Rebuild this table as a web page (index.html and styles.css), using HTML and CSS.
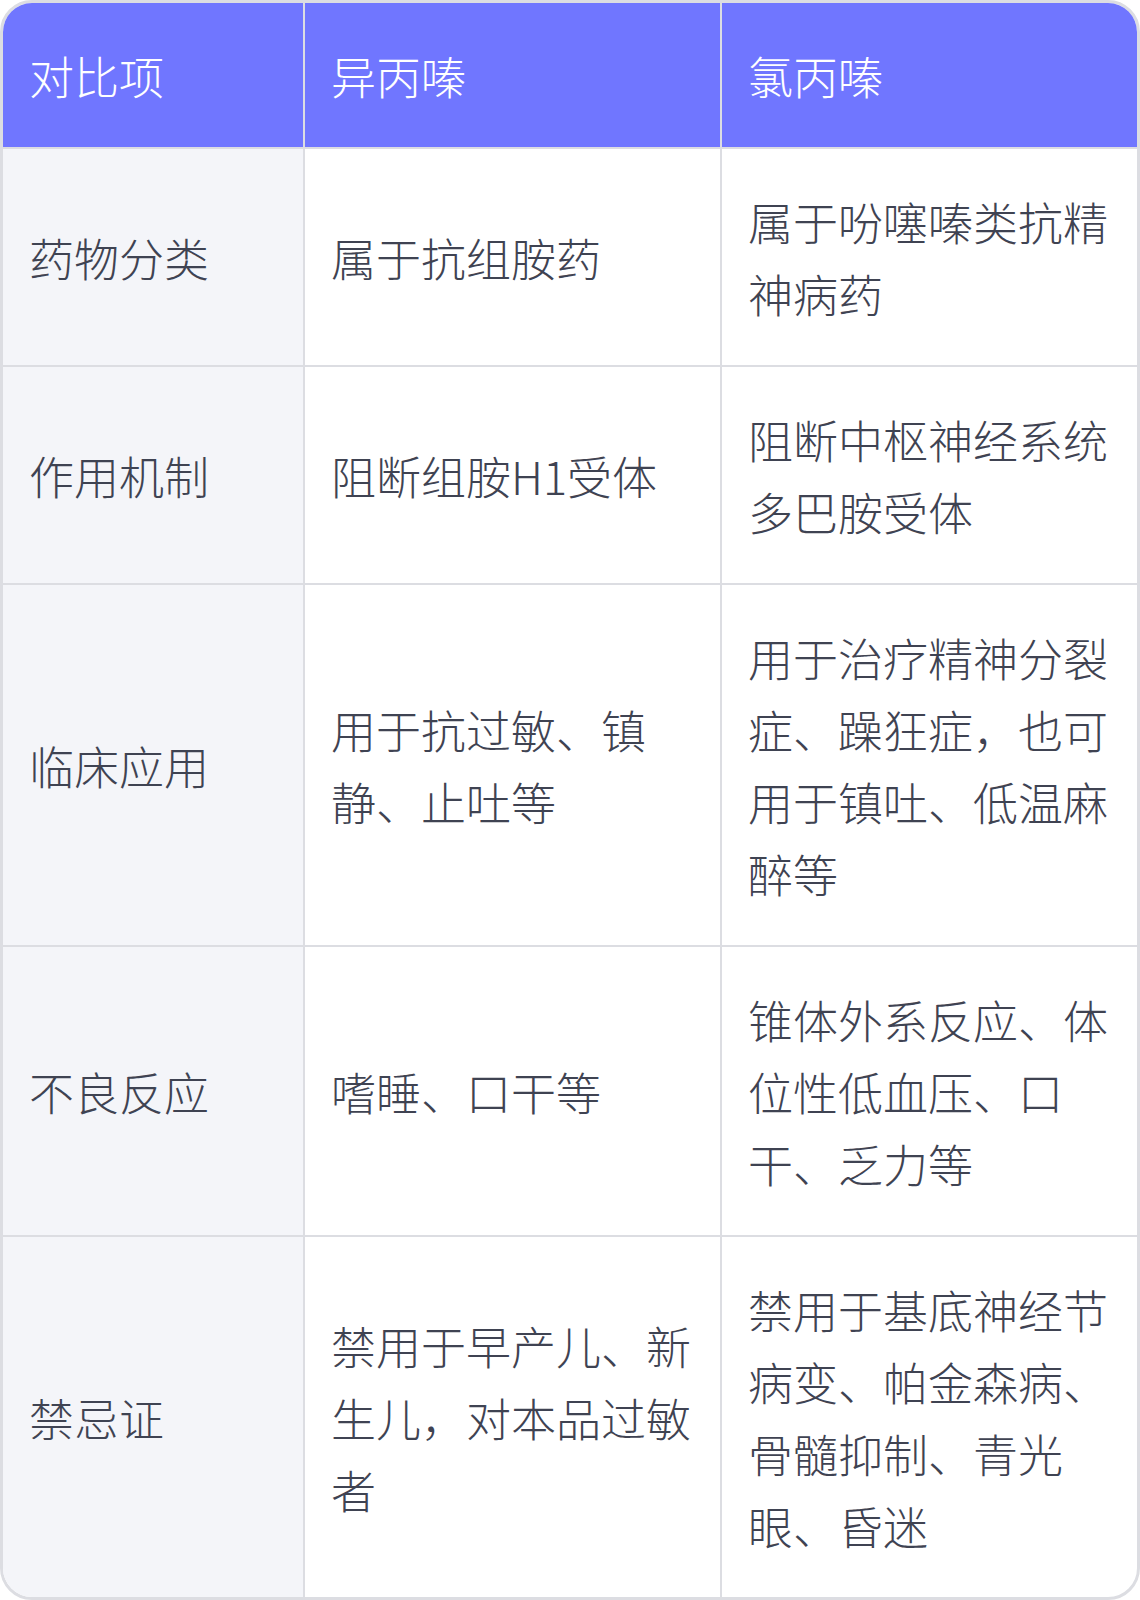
FILE: index.html
```html
<!DOCTYPE html>
<html lang="zh-CN">
<head>
<meta charset="utf-8">
<title>异丙嗪与氯丙嗪对比</title>
<link rel="stylesheet" href="styles.css">
</head>
<body>
<div class="wrap">
<table class="cmp">
<colgroup><col class="c1"><col class="c2"><col class="c3"></colgroup>
<thead>
<tr><th>对比项</th><th>异丙嗪</th><th>氯丙嗪</th></tr>
</thead>
<tbody>
<tr><td>药物分类</td><td>属于抗组胺药</td><td>属于吩噻嗪类抗精神病药</td></tr>
<tr><td>作用机制</td><td>阻断组胺H1受体</td><td>阻断中枢神经系统多巴胺受体</td></tr>
<tr><td>临床应用</td><td>用于抗过敏、镇静、止吐等</td><td>用于治疗精神分裂症、躁狂症，也可用于镇吐、低温麻醉等</td></tr>
<tr><td>不良反应</td><td>嗜睡、口干等</td><td>锥体外系反应、体位性低血压、口干、乏力等</td></tr>
<tr><td>禁忌证</td><td>禁用于早产儿、新生儿，对本品过敏者</td><td>禁用于基底神经节病变、帕金森病、骨髓抑制、青光眼、昏迷</td></tr>
</tbody>
</table>
</div>
</body>
</html>
```
FILE: styles.css
```css
html, body {
  margin: 0;
  padding: 0;
  background: #ffffff;
}
.wrap {
  width: 1140px;
  box-sizing: border-box;
  border: 3px solid #dcdde2;
  border-radius: 32px;
  overflow: hidden;
}
.cmp {
  width: 100%;
  border-collapse: separate;
  border-spacing: 0;
  table-layout: fixed;
  font-family: "Noto Sans CJK SC", "Noto Sans", sans-serif;
  font-weight: 300;
  font-size: 45px;
  line-height: 72px;
  color: #3f4352;
}
.c1 { width: 302px; }
.c2 { width: 417px; }
.c3 { width: 415px; }
.cmp th, .cmp td {
  padding: 37px 26px 35px 26px;
  text-align: left;
  vertical-align: middle;
  border-right: 2px solid #dcdde2;
  border-bottom: 2px solid #dcdde2;
  word-break: break-all;
}
.cmp th:last-child, .cmp td:last-child {
  border-right: none;
}
.cmp tbody tr:last-child td {
  border-bottom: none;
}
.cmp th {
  background: #7076ff;
  color: #ffffff;
  font-weight: 300;
}
.cmp td:first-child {
  background: #f4f5f9;
}
```
